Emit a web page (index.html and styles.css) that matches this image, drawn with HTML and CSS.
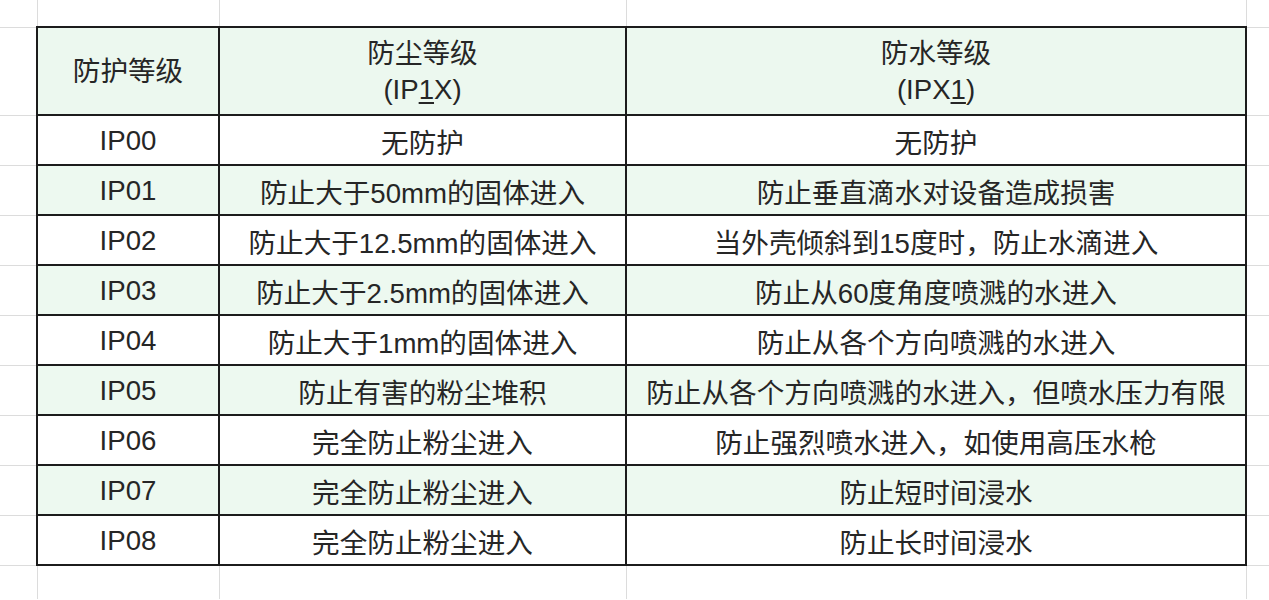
FILE: index.html
```html
<!DOCTYPE html>
<html lang="zh-CN">
<head>
<meta charset="utf-8">
<title>IP 防护等级</title>
<link rel="stylesheet" href="styles.css">
</head>
<body>
<table class="sheet">
  <colgroup>
    <col class="c-gutter">
    <col class="c-level">
    <col class="c-dust">
    <col class="c-water">
    <col class="c-tail">
  </colgroup>
  <tr class="r-top"><td class="g"></td><td class="g"></td><td class="g"></td><td class="g"></td><td class="g end"></td></tr>
  <tr class="r-head">
    <td class="g"></td>
    <td class="d">防护等级</td>
    <td class="d">防尘等级<br>(IP<u>1</u>X)</td>
    <td class="d">防水等级<br>(IPX<u>1</u>)</td>
    <td class="g end"></td>
  </tr>
  <tr class="r"><td class="g"></td><td class="d">IP00</td><td class="d">无防护</td><td class="d">无防护</td><td class="g end"></td></tr>
  <tr class="r alt"><td class="g"></td><td class="d">IP01</td><td class="d">防止大于50mm的固体进入</td><td class="d">防止垂直滴水对设备造成损害</td><td class="g end"></td></tr>
  <tr class="r"><td class="g"></td><td class="d">IP02</td><td class="d">防止大于12.5mm的固体进入</td><td class="d">当外壳倾斜到15度时，防止水滴进入</td><td class="g end"></td></tr>
  <tr class="r alt"><td class="g"></td><td class="d">IP03</td><td class="d">防止大于2.5mm的固体进入</td><td class="d">防止从60度角度喷溅的水进入</td><td class="g end"></td></tr>
  <tr class="r"><td class="g"></td><td class="d">IP04</td><td class="d">防止大于1mm的固体进入</td><td class="d">防止从各个方向喷溅的水进入</td><td class="g end"></td></tr>
  <tr class="r alt"><td class="g"></td><td class="d">IP05</td><td class="d">防止有害的粉尘堆积</td><td class="d">防止从各个方向喷溅的水进入，但喷水压力有限</td><td class="g end"></td></tr>
  <tr class="r"><td class="g"></td><td class="d">IP06</td><td class="d">完全防止粉尘进入</td><td class="d">防止强烈喷水进入，如使用高压水枪</td><td class="g end"></td></tr>
  <tr class="r alt"><td class="g"></td><td class="d">IP07</td><td class="d">完全防止粉尘进入</td><td class="d">防止短时间浸水</td><td class="g end"></td></tr>
  <tr class="r"><td class="g"></td><td class="d">IP08</td><td class="d">完全防止粉尘进入</td><td class="d">防止长时间浸水</td><td class="g end"></td></tr>
  <tr class="r-bottom"><td class="g"></td><td class="g"></td><td class="g"></td><td class="g"></td><td class="g end"></td></tr>
</table>
</body>
</html>
```

FILE: styles.css
```css
html, body {
  margin: 0;
  padding: 0;
  background: #ffffff;
  overflow: hidden;
}

.sheet {
  border-collapse: collapse;
  table-layout: fixed;
  width: 1269px;
  font-family: "Liberation Sans", "Noto Sans CJK SC", sans-serif;
  font-size: 27.6px;
  font-weight: 400;
  color: #262626;
}

.c-gutter { width: 37px; }
.c-level { width: 182px; }
.c-dust { width: 407px; }
.c-water { width: 620px; }
.c-tail { width: 23px; }

.sheet td {
  padding: 1px 0 0;
  text-align: center;
  vertical-align: middle;
  white-space: nowrap;
}

.sheet td.g {
  border-right: 1px solid #dcdcdc;
  border-bottom: 1px solid #dcdcdc;
}

.sheet td.g.end {
  border-right: none;
}

.r-bottom td.g {
  border-bottom: none;
}

.sheet td.d {
  border: 2px solid #1c1c1c;
}

.r-top { height: 27px; }
.r-head { height: 88px; }
.r { height: 50px; }
.r-bottom { height: 34px; }

.r-head td.d {
  background: #ecf8ef;
  line-height: 36px;
}

.r.alt td.d {
  background: #edf9f0;
}

.sheet u {
  text-decoration-thickness: 2px;
  text-underline-offset: 3px;
}
```
